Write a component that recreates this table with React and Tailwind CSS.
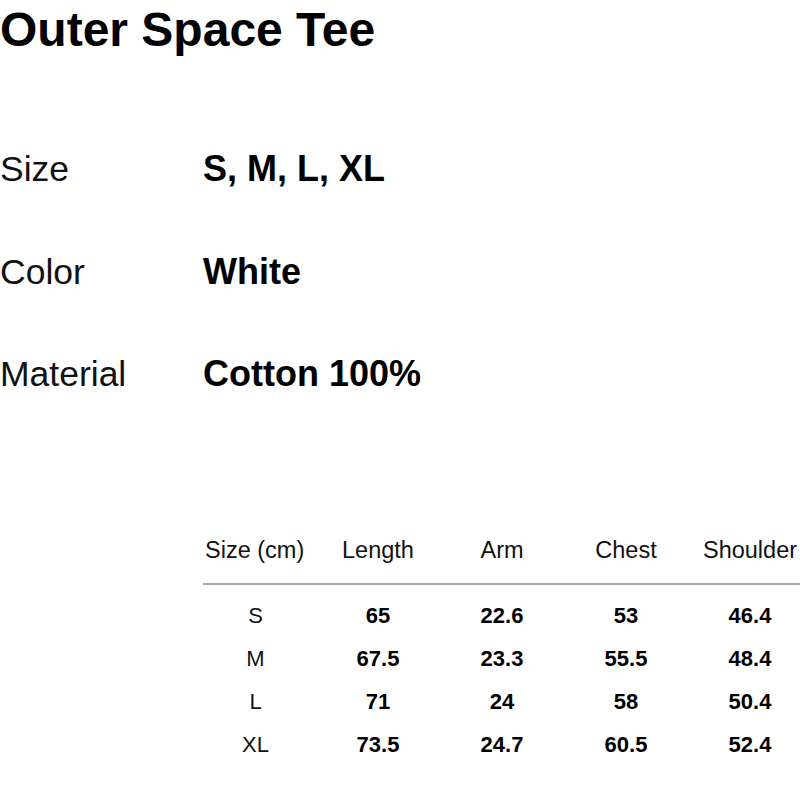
import React from "react";

const specs = [
  { label: "Size", value: "S, M, L, XL" },
  { label: "Color", value: "White" },
  { label: "Material", value: "Cotton 100%" },
];

const cols = ["Size (cm)", "Length", "Arm", "Chest", "Shoulder"];

const rows = [
  ["S", "65", "22.6", "53", "46.4"],
  ["M", "67.5", "23.3", "55.5", "48.4"],
  ["L", "71", "24", "58", "50.4"],
  ["XL", "73.5", "24.7", "60.5", "52.4"],
];

export default function App() {
  return (
    <div className="w-[800px] h-[800px] overflow-hidden bg-white text-black font-['Liberation_Sans',Arial,sans-serif]">
      <h1 className="pt-[6px] text-[48px] leading-none font-bold">Outer Space Tee</h1>

      <div className="mt-[97px] flex flex-col gap-[66px]">
        {specs.map((s) => (
          <div key={s.label} className="flex items-baseline leading-none">
            <div className="w-[203px] text-[35.5px] text-[#111]">{s.label}</div>
            <div className="text-[36px] font-bold">{s.value}</div>
          </div>
        ))}
      </div>

      <div className="mt-[146px] ml-[203px] w-[609px]">
        <div className="grid grid-cols-[113px_124px_124px_124px_124px] text-[23.5px] leading-none text-[#111] pb-[21px] border-b-2 border-[#a8a8a8]">
          {cols.map((c, i) => (
            <div key={c} className={i === 0 ? "text-left pl-[2px]" : "text-center"}>{c}</div>
          ))}
        </div>
        <div className="pt-[9px]">
          {rows.map((r) => (
            <div key={r[0]} className="grid grid-cols-[113px_124px_124px_124px_124px] text-[22px] leading-[43px]">
              {r.map((v, i) => (
                <div key={i} className={i === 0 ? "text-center pr-[8px] text-[#111]" : "text-center font-bold"}>{v}</div>
              ))}
            </div>
          ))}
        </div>
      </div>
    </div>
  );
}
